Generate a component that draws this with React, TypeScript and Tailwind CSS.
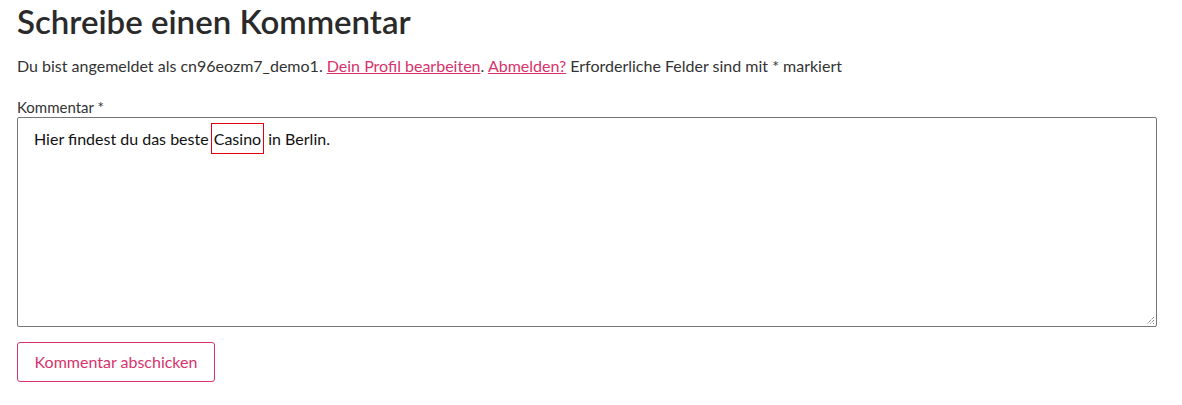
export default function App() {
  return (
    <div className="min-h-[405px] bg-white px-[17px] pt-0 text-[#333] font-['Lato','Open_Sans',sans-serif]">
      <h2 className="text-[33px] font-semibold leading-[42px] text-[#2a2a2a]">Schreibe einen Kommentar</h2>

      <p className="mt-[12px] text-[16px] leading-[24px]">
        Du bist angemeldet als cn96eozm7_demo1.{" "}
        <a href="#" className="text-[#d6336c] underline">Dein Profil bearbeiten</a>.{" "}
        <a href="#" className="text-[#d6336c] underline">Abmelden?</a> Erforderliche Felder sind mit * markiert
      </p>

      <div className="mt-[19px] flex flex-col">
        <label className="text-[15px] leading-[20px]">Kommentar *</label>
        <div className="relative h-[210px] w-[1140px] rounded-[2px] border border-[#767676] px-[16px] pt-[5px] text-[16px] text-[#111]">
          <span className="leading-[32px]">
            Hier findest du das beste{" "}
            <span className="-ml-[2px] border border-solid border-red-600 px-[2px] py-[5px]">Casino</span> in Berlin.
          </span>
          <svg className="absolute bottom-[1px] right-[1px]" width="9" height="9" viewBox="0 0 9 9">
            <path d="M8 1L1 8M8 4L4 8M8 7L7 8" stroke="#555" strokeWidth="1" strokeDasharray="1 1" />
          </svg>
        </div>
      </div>

      <button className="mt-[15px] h-[40px] w-[198px] rounded-[3px] border border-[#d6336c] text-[16px] text-[#d6336c]">
        Kommentar abschicken
      </button>
    </div>
  );
}
